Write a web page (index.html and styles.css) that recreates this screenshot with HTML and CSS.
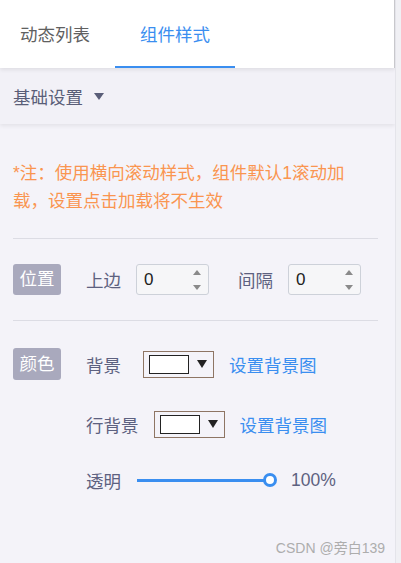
FILE: index.html
```html
<!DOCTYPE html>
<html lang="zh">
<head>
<meta charset="utf-8">
<link rel="stylesheet" href="styles.css">
</head>
<body>
<div class="page">
  <div class="tabs">
    <div class="tab tab-first">动态列表</div>
    <div class="tab tab-active">组件样式</div>
  </div>
  <div class="section-head">基础设置<span class="caret"></span></div>
  <div class="content">
    <p class="note">*注：使用横向滚动样式，组件默认1滚动加载，设置点击加载将不生效</p>
    <div class="divider"></div>
    <div class="row pos-row">
      <span class="badge">位置</span>
      <span class="label">上边</span>
      <div class="num-input"><span class="num-val">0</span><span class="spin"><i class="up"></i><i class="down"></i></span></div>
      <span class="label label-gap">间隔</span>
      <div class="num-input"><span class="num-val">0</span><span class="spin"><i class="up"></i><i class="down"></i></span></div>
    </div>
    <div class="divider"></div>
    <div class="color-block">
      <span class="badge">颜色</span>
      <div class="color-rows">
        <div class="crow crow-1">
          <span class="label label-bg">背景</span>
          <div class="color-select"><span class="swatch"></span><span class="tri"></span></div>
          <span class="link">设置背景图</span>
        </div>
        <div class="crow crow-2">
          <span class="label">行背景</span>
          <div class="color-select"><span class="swatch"></span><span class="tri"></span></div>
          <span class="link">设置背景图</span>
        </div>
        <div class="crow crow-3">
          <span class="label">透明</span>
          <div class="slider"><span class="track"></span><span class="thumb"></span></div>
          <span class="label">100%</span>
        </div>
      </div>
    </div>
  </div>
  <div class="watermark">CSDN @旁白139</div>
</div>
</body>
</html>
```
FILE: styles.css
```css
html, body {
  margin: 0;
  padding: 0;
}
body {
  background: #f0f0f4;
  font-family: "Liberation Sans", "Noto Sans CJK SC", sans-serif;
  font-size: 17.5px;
  color: #5d6180;
}
.page {
  position: relative;
  width: 396px;
  height: 563px;
  background: #f4f3f9;
  border-right: 1px solid #e4e4ea;
  box-sizing: border-box;
  overflow: hidden;
}
.tabs {
  position: relative;
  z-index: 2;
  display: flex;
  height: 68px;
  background: #ffffff;
  box-shadow: 0 2px 4px rgba(0, 0, 0, 0.08);
  border-right: 1px solid #c8c8cc;
}
.tab {
  height: 66px;
  line-height: 70px;
  text-align: center;
  color: #606060;
  border-bottom: 2px solid transparent;
}
.tab-first {
  width: 110px;
}
.tab-active {
  width: 120px;
  margin-left: 5px;
  color: #3a8ef0;
  border-bottom-color: #3a8ef0;
}
.section-head {
  position: relative;
  z-index: 1;
  display: flex;
  align-items: center;
  height: 56px;
  padding-left: 13px;
  background: #f2f1f7;
  box-shadow: 0 2px 4px rgba(0, 0, 0, 0.07);
  color: #5a5e78;
}
.caret {
  width: 0;
  height: 0;
  margin-left: 11px;
  border-left: 5px solid transparent;
  border-right: 5px solid transparent;
  border-top: 7px solid #5a5e78;
}
.content {
  padding: 35px 17px 0 13px;
}
.note {
  margin: 0;
  line-height: 28px;
  color: #fa9550;
}
.divider {
  height: 1px;
  background: #dcdce4;
  margin-top: 23px;
}
.row {
  display: flex;
  align-items: center;
}
.pos-row {
  margin-top: 25px;
  margin-bottom: 25px;
}
.pos-row + .divider {
  margin-top: 0;
}
.badge {
  display: inline-block;
  width: 48px;
  height: 31px;
  line-height: 31px;
  text-align: center;
  background: #a9a9bd;
  color: #ffffff;
  border-radius: 3px;
  flex: none;
}
.pos-row .badge {
  margin-right: 25px;
}
.label {
  color: #5d6180;
  white-space: nowrap;
}
.label-gap {
  margin-left: 29px;
}
.num-input {
  position: relative;
  display: flex;
  align-items: center;
  box-sizing: border-box;
  width: 73px;
  height: 31px;
  margin-left: 15px;
  padding-left: 7px;
  background: #f6f6f8;
  border: 1px solid #cdd1d9;
  border-radius: 3px;
  color: #222;
  font-size: 17px;
}
.num-val {
  flex: 1;
}
.spin {
  display: flex;
  flex-direction: column;
  justify-content: space-between;
  height: 20px;
  margin-right: 7px;
}
.spin i {
  display: block;
  width: 0;
  height: 0;
  border-left: 4px solid transparent;
  border-right: 4px solid transparent;
}
.spin .up {
  border-bottom: 5px solid #8a8a8a;
}
.spin .down {
  border-top: 5px solid #8a8a8a;
}
.color-block {
  display: flex;
  align-items: flex-start;
  margin-top: 27px;
}
.color-block .badge {
  height: 32px;
  line-height: 32px;
  margin-right: 25px;
}
.color-rows {
  display: flex;
  flex-direction: column;
}
.crow {
  display: flex;
  align-items: center;
  height: 32px;
}
.crow-2 {
  margin-top: 28px;
}
.crow-3 {
  margin-top: 24px;
}
.label-bg {
  margin-right: 7px;
}
.color-select {
  display: flex;
  align-items: center;
  box-sizing: border-box;
  width: 71px;
  height: 27px;
  margin-left: 15px;
  padding-left: 5px;
  border: 1px solid #8e7564;
  background: #f4f3f9;
}
.swatch {
  box-sizing: border-box;
  width: 40px;
  height: 19px;
  background: #ffffff;
  border: 1.5px solid #222222;
}
.tri {
  width: 0;
  height: 0;
  margin-left: 8px;
  border-left: 5px solid transparent;
  border-right: 5px solid transparent;
  border-top: 8px solid #222222;
}
.link {
  margin-left: 15px;
  color: #3a8ef0;
}
.slider {
  position: relative;
  display: flex;
  align-items: center;
  width: 140px;
  height: 16px;
  margin-left: 16px;
  margin-right: 14px;
}
.track {
  display: block;
  width: 130px;
  height: 3px;
  background: #3a8ef0;
}
.thumb {
  box-sizing: border-box;
  width: 14px;
  height: 14px;
  margin-left: -4px;
  border: 3px solid #3a8ef0;
  border-radius: 50%;
  background: #ffffff;
}
.watermark {
  position: absolute;
  right: 10px;
  bottom: 6px;
  font-size: 14px;
  color: #adadad;
}
```
